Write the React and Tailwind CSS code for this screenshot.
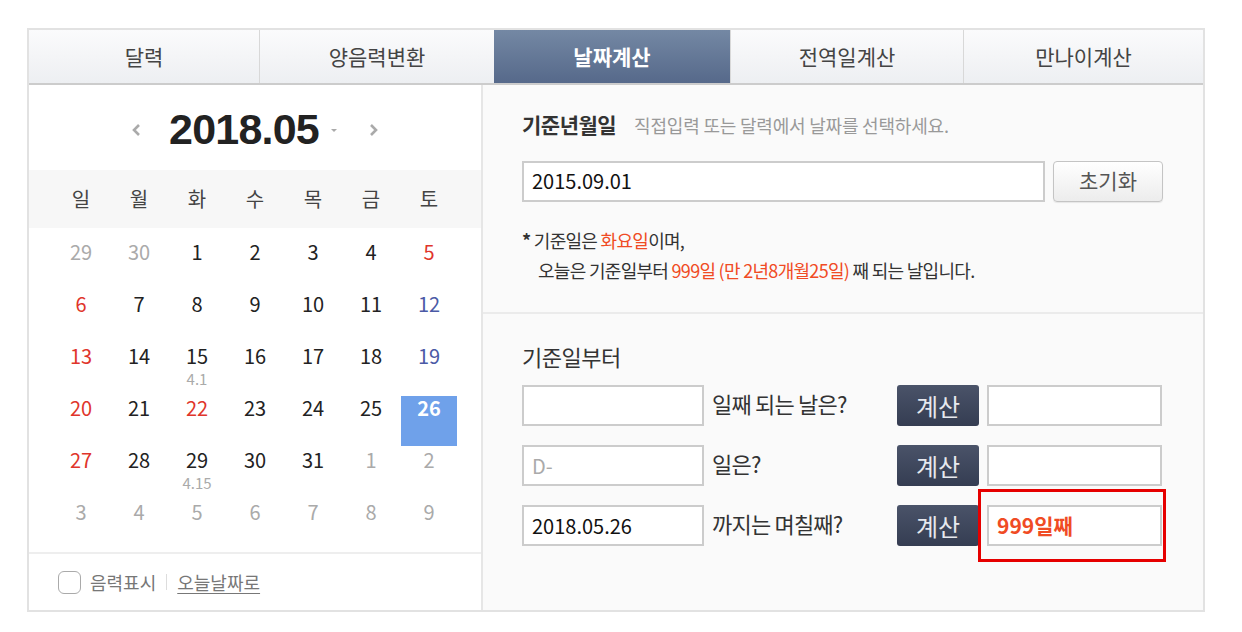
// Date calculator widget: tab bar, month calendar on the left, calculator form on the right.
const KR = { fontFamily: '"Noto Sans CJK KR", "Noto Sans", sans-serif' };

const tabs = [
  { label: "달력", w: "w-[230px]" },
  { label: "양음력변환", w: "w-[235px]" },
  { label: "날짜계산", w: "w-[236px]", active: true },
  { label: "전역일계산", w: "w-[233px]" },
  { label: "만나이계산", w: "w-[240px]" },
];

const weekdays = ["일", "월", "화", "수", "목", "금", "토"];

// tone: muted | sun | sat | today | normal
const weeks = [
  [["29", "muted"], ["30", "muted"], ["1"], ["2"], ["3"], ["4"], ["5", "sun"]],
  [["6", "sun"], ["7"], ["8"], ["9"], ["10"], ["11"], ["12", "sat"]],
  [["13", "sun"], ["14"], ["15", null, "4.1"], ["16"], ["17"], ["18"], ["19", "sat"]],
  [["20", "sun"], ["21"], ["22", "sun"], ["23"], ["24"], ["25"], ["26", "today"]],
  [["27", "sun"], ["28"], ["29", null, "4.15"], ["30"], ["31"], ["1", "muted"], ["2", "muted"]],
  [["3", "muted"], ["4", "muted"], ["5", "muted"], ["6", "muted"], ["7", "muted"], ["8", "muted"], ["9", "muted"]],
];

const toneClass = {
  muted: "text-[#aaa]",
  sun: "text-[#e0352b]",
  sat: "text-[#4b5aa6]",
  today: "text-white font-bold",
};

function DayCell({ day, tone, lunar }) {
  return (
    <div className="h-[52px] flex flex-col items-center">
      <div
        className={
          "w-[56px] h-[50px] flex flex-col items-center " +
          (tone === "today" ? "bg-[#6fa1ea]" : "")
        }
      >
        <span className={"text-[20px] leading-[24px] " + (toneClass[tone] || "text-[#222]")}>
          {day}
        </span>
        {lunar && <span className="text-[15px] leading-[20px] mt-[1px] text-[#aaa]">{lunar}</span>}
      </div>
    </div>
  );
}

function Calendar() {
  return (
    <div className="w-[452px] flex flex-col">
      <div className="h-[85px] flex items-center justify-center pt-[4px]">
        <svg width="12" height="16" viewBox="0 0 12 16" className="mr-[26px]">
          <path d="M8 3 L3 8 L8 13" stroke="#aaa" strokeWidth="2.6" fill="none" />
        </svg>
        <span
          className="text-[43px] font-bold text-[#222] tracking-[-0.8px]"
          style={{ fontFamily: '"Liberation Sans", Arial, sans-serif' }}
        >
          2018.05
        </span>
        <svg width="10" height="8" viewBox="0 0 10 8" className="ml-[10px]">
          <path d="M2 3 L8 3 L5 6 Z" fill="#aaa" />
        </svg>
        <svg width="12" height="16" viewBox="0 0 12 16" className="ml-[28px]">
          <path d="M4 3 L9 8 L4 13" stroke="#aaa" strokeWidth="2.6" fill="none" />
        </svg>
      </div>

      <div className="h-[58px] bg-[#f7f7f7] grid grid-cols-7 px-[23px] items-center">
        {weekdays.map((d) => (
          <span key={d} className="text-center text-[20px] text-[#444]">
            {d}
          </span>
        ))}
      </div>

      <div className="px-[23px] pt-[12px] grid grid-cols-7">
        {weeks.flat().map(([day, tone, lunar], i) => (
          <DayCell key={i} day={day} tone={tone} lunar={lunar} />
        ))}
      </div>

      <div className="mt-auto h-[58px] border-t-2 border-[#eee] flex items-center pl-[29px] text-[18px]">
        <span className="w-[23px] h-[23px] rounded-[6px] border border-[#aaa] bg-white" />
        <span className="ml-[9px] text-[#777]">음력표시</span>
        <span className="mx-[10px] w-px h-[16px] bg-[#ddd]" />
        <span className="text-[#777] underline underline-offset-[3px]">오늘날짜로</span>
      </div>
    </div>
  );
}

function CalcButton({ children }) {
  return (
    <button className="w-[82px] h-[41px] rounded-[3px] bg-gradient-to-b from-[#4a5369] to-[#353d52] text-[#e6e8ee] text-[24px] leading-none">
      {children}
    </button>
  );
}

function Field({ w, children, className = "" }) {
  return (
    <div
      className={
        "h-[41px] border-2 border-[#ccc] bg-white flex items-center px-[8px] " +
        w +
        " " +
        className
      }
    >
      {children}
    </div>
  );
}

function CalcForm() {
  return (
    <div className="flex-1 bg-[#fafafa] border-l-2 border-[#e6e6e6] flex flex-col">
      <div className="h-[229px] border-b-2 border-[#ebebeb] pl-[39px] pt-[24px]">
        <div className="flex items-baseline gap-[18px]">
          <span className="text-[21px] font-bold text-[#333] tracking-[-0.5px]">기준년월일</span>
          <span className="text-[18px] text-[#999] tracking-[-0.2px]">
            직접입력 또는 달력에서 날짜를 선택하세요.
          </span>
        </div>
        <div className="flex gap-[8px] mt-[20px]">
          <Field w="w-[523px]" className="text-[#111] text-[20px]">2015.09.01</Field>
          <button className="w-[110px] h-[41px] rounded-[4px] border border-[#c4c4c4] bg-gradient-to-b from-white to-[#ececec] text-[21px] text-[#555] shadow-[0_1px_1px_rgba(0,0,0,0.08)]">
            초기화
          </button>
        </div>
        <div className="mt-[23px] text-[18px] text-[#333] leading-[30px] tracking-[-0.7px]">
          <div>
            <span className="font-bold">*</span> 기준일은 <span className="text-[#f04b24]">화요일</span>이며,
          </div>
          <div className="pl-[16px]">
            오늘은 기준일부터{" "}
            <span className="text-[#f04b24]">999일 (만 2년8개월25일)</span> 째 되는 날입니다.
          </div>
        </div>
      </div>

      <div className="pl-[39px] pt-[26px]">
        <div className="text-[22px] text-[#333] tracking-[-0.5px]">기준일부터</div>
        <div className="mt-[12px] flex flex-col gap-[19px]">
          {[
            { input: "", ph: false, label: "일째 되는 날은?", result: "" },
            { input: "D-", ph: true, label: "일은?", result: "" },
            { input: "2018.05.26", ph: false, label: "까지는 며칠째?", result: "999일째", mark: true },
          ].map((r, i) => (
            <div key={i} className="flex items-center">
              <Field w="w-[182px]" className={"text-[20px] " + (r.ph ? "text-[#aaa]" : "text-[#111]")}>
                {r.input}
              </Field>
              <span className="w-[193px] pl-[8px] text-[22px] leading-[36px] text-[#333] tracking-[-0.8px] self-start">
                {r.label}
              </span>
              <CalcButton>계산</CalcButton>
              <div className="relative ml-[8px]">
                <Field w="w-[175px]" className="text-[#f04b24] font-bold text-[21px]">
                  {r.result}
                </Field>
                {r.mark && (
                  <div className="absolute -left-[9px] -right-[4px] -top-[16px] -bottom-[16px] border-[3px] border-[#e60000]" />
                )}
              </div>
            </div>
          ))}
        </div>
      </div>
    </div>
  );
}

export default function App() {
  return (
    <div className="w-[1242px] h-[632px] bg-white pt-[28px] pl-[27px]" style={KR}>
      <div className="w-[1178px] h-[584px] border-2 border-[#e2e2e2] flex flex-col">
        <div className="h-[55px] flex border-b-2 border-[#ccc]">
          {tabs.map((t, i) =>
            t.active ? (
              <div
                key={t.label}
                className={t.w + " flex items-center justify-center bg-gradient-to-b from-[#7488a4] to-[#56698a] text-white text-[21px] font-bold"}
              >
                {t.label}
              </div>
            ) : (
              <div
                key={t.label}
                className={
                  t.w +
                  " flex items-center justify-center bg-gradient-to-b from-[#fbfbfc] to-[#edeff2] text-[#444] text-[21px] " +
                  (i > 0 ? "border-l border-[#d8d8d8]" : "")
                }
              >
                {t.label}
              </div>
            )
          )}
        </div>
        <div className="flex-1 flex">
          <Calendar />
          <CalcForm />
        </div>
      </div>
    </div>
  );
}
